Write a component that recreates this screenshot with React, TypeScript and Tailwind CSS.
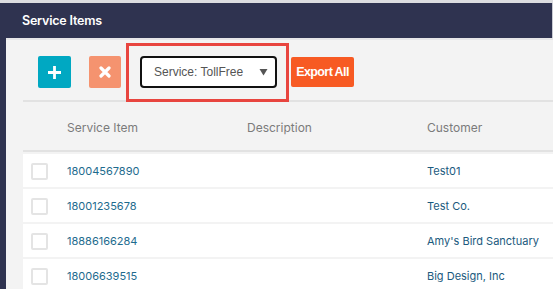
import React from "react";

const ROWS = [
  { item: "18004567890", description: "", customer: "Test01" },
  { item: "18001235678", description: "", customer: "Test Co." },
  { item: "18886166284", description: "", customer: "Amy's Bird Sanctuary" },
  { item: "18006639515", description: "", customer: "Big Design, Inc" },
];

export default function App() {
  return (
    <div
      className="w-[553px] h-[289px] overflow-hidden bg-[#f3f3f3] border-t-[3px] border-[#dcdde0]"
      style={{ fontFamily: "Inter, 'Noto Sans', sans-serif" }}
    >
      <div className="h-[35px] bg-[#2f3350] flex items-center pl-[22px] pt-[2px] border-r border-[#c9cbd3]">
        <span className="text-white text-[12.5px] font-semibold tracking-[-0.2px]">Service Items</span>
      </div>
      <div className="flex h-[251px]">
        <div className="w-[6px] bg-[#2f3350] shrink-0" />
        <div className="flex-1 border-t-2 border-[#e6e6e8] pl-[17px]">
          {/* toolbar */}
          <div className="h-[62px] border-b-2 border-[#e2e2e2] flex items-center pl-[15px] pt-[4px]">
            <button className="w-[33px] h-[32px] bg-[#00a8c2] rounded-[2px] flex items-center justify-center">
              <svg width="15" height="15" viewBox="0 0 15 15">
                <path d="M7.5 1v13M1 7.5h13" stroke="#fff" strokeWidth="2.8" />
              </svg>
            </button>
            <button className="ml-[18px] w-[32px] h-[32px] bg-[#f5936f] rounded-[2px] flex items-center justify-center">
              <svg width="12" height="12" viewBox="0 0 12 12">
                <path d="M2 2l8 8M10 2l-8 8" stroke="#fff" strokeWidth="3.2" strokeLinecap="round" />
              </svg>
            </button>
            <div className="relative ml-[19px]">
              <div className="w-[137px] h-[32px] bg-white border-2 border-[#111] rounded-[4px] flex items-center justify-between pl-[12px] pr-[7px]">
                <span className="text-[12px] text-[#555]" style={{ fontFamily: "'Liberation Sans', Arial, sans-serif" }}>
                  Service: TollFree
                </span>
                <svg width="9" height="8" viewBox="0 0 9 8">
                  <path d="M0.5 1h8L4.5 7.5z" fill="#555" />
                </svg>
              </div>
              <div className="absolute -left-[14px] -right-[12px] -top-[13px] -bottom-[14px] border-[3px] border-[#e8453f] pointer-events-none" />
            </div>
            <button
              className="ml-[14px] w-[63px] h-[30px] bg-[#f75a23] rounded-[2px] text-white text-[12.5px] font-bold tracking-[-0.6px]"
              style={{ fontFamily: "'Liberation Sans', Arial, sans-serif" }}
            >
              Export All
            </button>
          </div>
          {/* header */}
          <div className="h-[50px] border-b-2 border-[#e2e2e2] flex items-center pt-[3px] text-[12px] text-[#7b7b7b]">
            <div className="w-[44px] shrink-0" />
            <div className="w-[180px] shrink-0">Service Item</div>
            <div className="w-[180px] shrink-0">Description</div>
            <div className="flex-1">Customer</div>
          </div>
          {/* rows */}
          <div className="flex flex-col gap-[2px] pt-[2px]">
            {ROWS.map((row) => (
              <div key={row.item} className="h-[33px] bg-white flex items-center pt-[1px] text-[11px]">
                <div className="w-[44px] shrink-0 pl-[8px]">
                  <div className="w-[17px] h-[17px] border-2 border-[#e4e4e4] rounded-[2px] bg-white" />
                </div>
                <div className="w-[180px] shrink-0 text-[#1e6b8e]">{row.item}</div>
                <div className="w-[180px] shrink-0 text-[#333]">{row.description}</div>
                <div className="flex-1 text-[#1b5a7e]">{row.customer}</div>
              </div>
            ))}
          </div>
        </div>
      </div>
    </div>
  );
}
